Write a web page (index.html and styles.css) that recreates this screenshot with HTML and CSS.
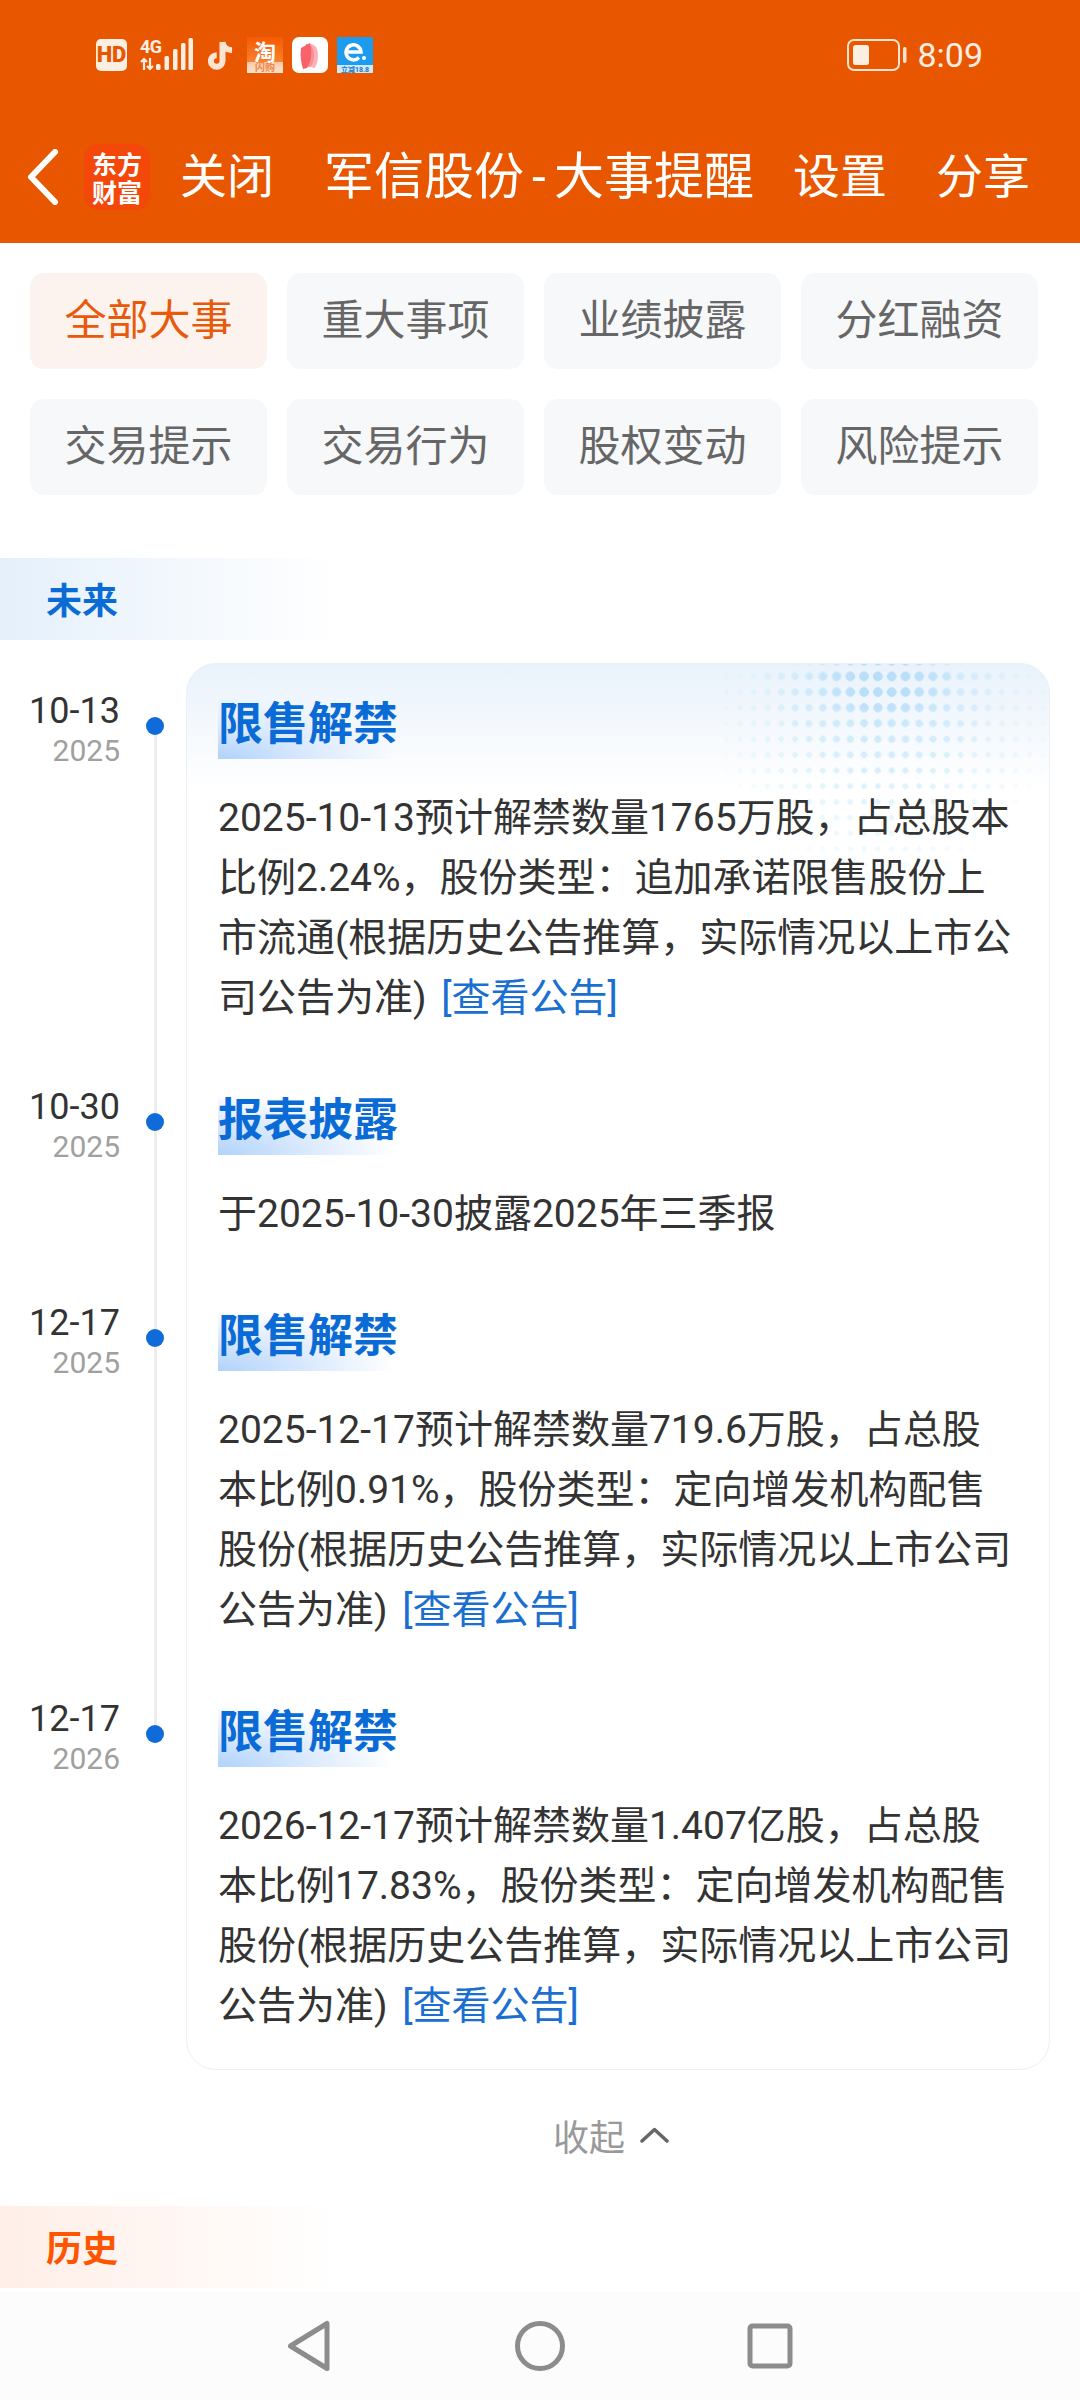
FILE: index.html
```html
<!DOCTYPE html>
<html lang="zh-CN">
<head>
<meta charset="utf-8">
<title>军信股份-大事提醒</title>
<link rel="stylesheet" href="styles.css">
</head>
<body>
<div class="page">
  <header class="header">
    <div class="status">
      <div class="status-left">
        <svg class="ic-hd" width="31" height="32" viewBox="0 0 31 32"><rect width="31" height="32" rx="5" fill="#fdeee2"/><text x="15.5" y="23" text-anchor="middle" class="svg-hd">HD</text></svg>
        <svg class="ic-sig" width="53" height="34" viewBox="0 0 53 34"><text x="0" y="15" class="svg-4g">4G</text><path d="M4 32v-11M1 24l3-3 3 3M10 20v11M7 28l3 3 3-3" fill="none" stroke="#fdeee2" stroke-width="2.200"/><rect x="16" y="26" width="4.500" height="6" rx="1.500" fill="#fdeee2"/><rect x="24.500" y="18" width="4.500" height="14" rx="1.500" fill="#fdeee2"/><rect x="33" y="11" width="4.500" height="21" rx="1.500" fill="#fdeee2"/><rect x="41" y="5" width="4.500" height="27" rx="1.500" fill="#fdeee2"/><rect x="48.500" y="0" width="4.500" height="32" rx="1.500" fill="#fdeee2"/></svg>
        <svg class="ic-tt" width="27" height="32" viewBox="0 0 27 32"><path d="M14.5 3v19a5.800 5.800 0 1 1-5.800-5.800M14.5 3c.4 4.500 4 8 9.500 8.300" fill="none" stroke="#fde3d2" stroke-width="6"/></svg>
        <svg class="ic-app" width="36" height="36" viewBox="0 0 36 36"><defs><linearGradient id="tb" x1="0" y1="0" x2="0" y2="1"><stop offset="0" stop-color="#f55a00"/><stop offset=".68" stop-color="#f98030"/><stop offset=".7" stop-color="#fcc9a4"/><stop offset="1" stop-color="#fbe3d2"/></linearGradient></defs><rect width="36" height="36" fill="url(#tb)"/><text x="18" y="23" text-anchor="middle" class="svg-tao">淘</text><text x="18" y="34" text-anchor="middle" class="svg-shan">闪购</text></svg>
        <svg class="ic-app" width="36" height="36" viewBox="0 0 36 36"><rect width="36" height="36" rx="7" fill="#fff"/><path d="M17 7c5 0 9 2 9 12 0 6-2 11-4 12l-6-2z" fill="#fbb2b8"/><path d="M14 7c5 0 8 3 8 12 0 6-2 9-4 11l-6-1z" fill="#fb8e96"/><path d="M9 11l9-5c2 7 2 17-3 25l-4 1c-2-6-3-14-2-21z" fill="#f9616b"/></svg>
        <svg class="ic-app" width="36" height="36" viewBox="0 0 36 36"><rect width="36" height="36" fill="#1d9bee"/><rect y="28" width="36" height="8" fill="#cdeafb"/><path d="M11 15h13a7.500 7.500 0 1 0-2 5.500" fill="none" stroke="#fff" stroke-width="3.500"/><circle cx="27" cy="21" r="2" fill="#fff"/><text x="18" y="35" text-anchor="middle" class="svg-e">立减18.8</text></svg>
      </div>
      <div class="status-right">
        <svg width="60" height="32" viewBox="0 0 60 32"><rect x="1" y="1" width="51" height="30" rx="6" fill="none" stroke="#fde3d2" stroke-width="2"/><rect x="6" y="6" width="16" height="20" rx="2.500" fill="#fdeee2"/><rect x="56" y="8" width="3.500" height="16" rx="1.700" fill="#fde3d2"/></svg>
        <span class="clock">8:09</span>
      </div>
    </div>
    <div class="navbar">
      <svg class="back" width="32" height="56" viewBox="0 0 32 56"><path d="M28 3L4 28l24 25" fill="none" stroke="#fff" stroke-width="6" stroke-linecap="round" stroke-linejoin="round"/></svg>
      <div class="logo"><span>东方</span><span>财富</span></div>
      <span class="nav-close">关闭</span>
      <span class="nav-title">军信股份<span class="nav-dash">-</span>大事提醒</span>
      <span class="nav-set">设置</span>
      <span class="nav-share">分享</span>
    </div>
  </header>

  <section class="chips">
    <div class="chip chip-active">全部大事</div>
    <div class="chip">重大事项</div>
    <div class="chip">业绩披露</div>
    <div class="chip">分红融资</div>
    <div class="chip">交易提示</div>
    <div class="chip">交易行为</div>
    <div class="chip">股权变动</div>
    <div class="chip">风险提示</div>
  </section>

  <div class="band band-blue">未来</div>

  <section class="timeline">
    <div class="card">
      <div class="dots dots-far"></div>
      <div class="dots dots-mid"></div>
      <div class="dots dots-near"></div>
    </div>
    <div class="rail"></div>

    <div class="date r1"><div class="md">10-13</div><div class="yr">2025</div></div>
    <div class="event r1">
      <h3 class="ev-title">限售解禁</h3>
      <p class="ev-text">2025-10-13预计解禁数量1765万股，占总股本比例2.24%，股份类型：追加承诺限售股份上市流通(根据历史公告推算，实际情况以上市公司公告为准) <span class="link">[查看公告]</span></p>
    </div>

    <div class="date r2"><div class="md">10-30</div><div class="yr">2025</div></div>
    <div class="event r2">
      <h3 class="ev-title">报表披露</h3>
      <p class="ev-text">于2025-10-30披露2025年三季报</p>
    </div>

    <div class="date r3"><div class="md">12-17</div><div class="yr">2025</div></div>
    <div class="event r3">
      <h3 class="ev-title">限售解禁</h3>
      <p class="ev-text">2025-12-17预计解禁数量719.6万股，占总股本比例0.91%，股份类型：定向增发机构配售股份(根据历史公告推算，实际情况以上市公司公告为准) <span class="link">[查看公告]</span></p>
    </div>

    <div class="date r4"><div class="md">12-17</div><div class="yr">2026</div></div>
    <div class="event r4">
      <h3 class="ev-title">限售解禁</h3>
      <p class="ev-text">2026-12-17预计解禁数量1.407亿股，占总股本比例17.83%，股份类型：定向增发机构配售股份(根据历史公告推算，实际情况以上市公司公告为准) <span class="link">[查看公告]</span></p>
    </div>
  </section>

  <div class="collapse">
    <span>收起</span>
    <svg width="29" height="16" viewBox="0 0 29 16"><path d="M2 14L14.500 2.500 27 14" fill="none" stroke="#666" stroke-width="3.500" stroke-linecap="round" stroke-linejoin="round"/></svg>
  </div>

  <div class="band band-orange">历史</div>

  <nav class="sysnav">
    <svg width="44" height="52" viewBox="0 0 44 52"><path d="M40 3.500v45L3.500 26z" fill="none" stroke="#8c8c8c" stroke-width="5" stroke-linejoin="round"/></svg>
    <svg width="50" height="50" viewBox="0 0 50 50"><circle cx="25" cy="25" r="22.500" fill="none" stroke="#8c8c8c" stroke-width="5"/></svg>
    <svg width="46" height="46" viewBox="0 0 46 46"><rect x="3" y="3" width="40" height="40" rx="2.500" fill="none" stroke="#8c8c8c" stroke-width="5"/></svg>
  </nav>
</div>
</body>
</html>
```

FILE: styles.css
```css
* { box-sizing: border-box; }
html, body { margin: 0; padding: 0; background: #fff; }
body { font-family: Roboto, "Noto Sans CJK SC", sans-serif; color: #333; }
.page { width: 1080px; height: 2400px; overflow: hidden; display: flex; flex-direction: column; }

/* header */
.header { height: 243px; background: #e85700; color: #fff; flex: none; }
.status { height: 110px; display: flex; justify-content: space-between; align-items: center; padding: 0 97px 0 96px; }
.status-left { display: flex; align-items: center; }
.ic-hd { margin-right: 13px; }
.ic-sig { margin-right: 15px; }
.ic-tt { margin-right: 12px; }
.ic-app { margin-right: 9px; }
.status-right { display: flex; align-items: center; gap: 10px; }
.clock { font-size: 34px; color: #fdeee2; }
.svg-hd { font: 900 22px Roboto, sans-serif; fill: #e85700; }
.svg-4g { font: 700 18px Roboto, sans-serif; letter-spacing: -.5px; fill: #fdeee2; }
.svg-tao { font: 700 22px "Noto Sans CJK SC", sans-serif; fill: #fff; }
.svg-shan { font: 700 10px "Noto Sans CJK SC", sans-serif; fill: #f0864a; }
.svg-e { font: 700 7px Roboto, "Noto Sans CJK SC", sans-serif; fill: #1276c8; }

.navbar { height: 133px; display: flex; align-items: center; font-size: 47px; line-height: 66px; white-space: nowrap; }
.back { margin-left: 27px; flex: none; }
.logo { width: 66px; height: 66px; margin-left: 25px; border-radius: 15px; background: #f4470a; display: flex; flex-direction: column; align-items: center; justify-content: center; font: 700 25px/28px "Noto Sans CJK SC", sans-serif; flex: none; }
.nav-close { margin-left: 30px; }
.nav-title { margin-left: 50px; font-size: 50px; }
.nav-dash { display: inline-block; width: 30px; text-align: center; }
.nav-set { margin-left: 39px; }
.nav-share { margin-left: 49px; }

/* chips */
.chips { display: grid; grid-template-columns: repeat(4, 237px); column-gap: 20px; row-gap: 30px; padding: 30px 0 0 30px; flex: none; }
.chip { height: 96px; border-radius: 14px; background: #f7f8fa; color: #666; font-size: 42px; line-height: 96px; text-align: center; }
.chip-active { background: #fdf3ee; color: #e85a0b; }

/* section bands */
.band { height: 82px; width: 340px; padding-left: 46px; padding-top: 3px; font-size: 36px; font-weight: 700; line-height: 82px; flex: none; }
.band-blue { margin-top: 63px; color: #0b6bd6; background: linear-gradient(90deg, #e5f0fb, #fff); }
.band-orange { margin-top: 41px; color: #ff5500; background: linear-gradient(90deg, #ffeee7, #fff); }

/* timeline */
.timeline { margin-top: 23px; display: grid; grid-template-columns: 186px 864px; grid-template-rows: repeat(4, auto); flex: none; }
.card { grid-column: 2; grid-row: 1 / 5; position: relative; overflow: hidden; border: 1.5px solid #e9f0f7; border-radius: 30px; background: linear-gradient(180deg, #e9f2fb 0, #fff 125px); }
.dots { position: absolute; right: 0; top: 0; width: 324px; height: 240px; background-size: 13.800px 15.700px; background-position: 8px 4.600px; }
.dots-far { background-image: radial-gradient(circle, #daf1fb 2.500px, transparent 3px); -webkit-mask-image: radial-gradient(ellipse 190px 225px at 49% 0, #000 50%, transparent 100%); mask-image: radial-gradient(ellipse 190px 225px at 49% 0, #000 50%, transparent 100%); }
.dots-mid { background-image: radial-gradient(circle, #c9e8fa 3.500px, transparent 4px); -webkit-mask-image: radial-gradient(ellipse 125px 115px at 49% 0, #000 45%, transparent 100%); mask-image: radial-gradient(ellipse 125px 115px at 49% 0, #000 45%, transparent 100%); }
.dots-near { background-image: radial-gradient(circle, #b9def8 4.500px, transparent 5px); -webkit-mask-image: radial-gradient(ellipse 75px 50px at 49% 14px, #000 40%, transparent 100%); mask-image: radial-gradient(ellipse 75px 50px at 49% 14px, #000 40%, transparent 100%); }
.rail { grid-column: 1; grid-row: 1 / 5; width: 3px; margin: 63px 0 336px 154px; background: #eee; }

.r1 { grid-row: 1; }
.r2 { grid-row: 2; }
.r3 { grid-row: 3; }
.r4 { grid-row: 4; }
.date { grid-column: 1; position: relative; padding: 29px 66px 0 0; text-align: right; }
.date::after { content: ""; position: absolute; left: 146px; top: 54px; width: 18px; height: 18px; border-radius: 50%; background: #0e6bd8; }
.md { font-size: 36px; line-height: 39px; color: #333; }
.yr { font-size: 30px; line-height: 40px; color: #a0a0a0; }

.event { grid-column: 2; position: relative; padding: 36px 37px 31px 32px; }
.event.r4 { padding-bottom: 34px; }
.ev-title { margin: 0; width: 182px; height: 60px; font-size: 45px; line-height: 52px; font-weight: 700; white-space: nowrap; color: #0b6bd6; background: radial-gradient(ellipse 178px 62px at 0 100%, #b0d2fb 0, #d9e9fd 50%, rgba(255,255,255,0) 100%); }
.ev-text { margin: 29px 0 0; font-size: 39px; line-height: 60px; color: #333; }
.link { color: #1a6fd0; margin-left: 5px; }

/* collapse */
.collapse { margin-top: 35px; height: 60px; display: flex; justify-content: center; align-items: center; gap: 15px; padding-left: 142px; font-size: 36px; color: #999; flex: none; }

/* system nav */
.sysnav { margin-top: 4px; height: 108px; background: #fcfcfc; display: flex; align-items: center; padding-left: 287px; flex: none; }
.sysnav svg:nth-child(1) { margin-right: 184px; }
.sysnav svg:nth-child(2) { margin-right: 182px; }
```
